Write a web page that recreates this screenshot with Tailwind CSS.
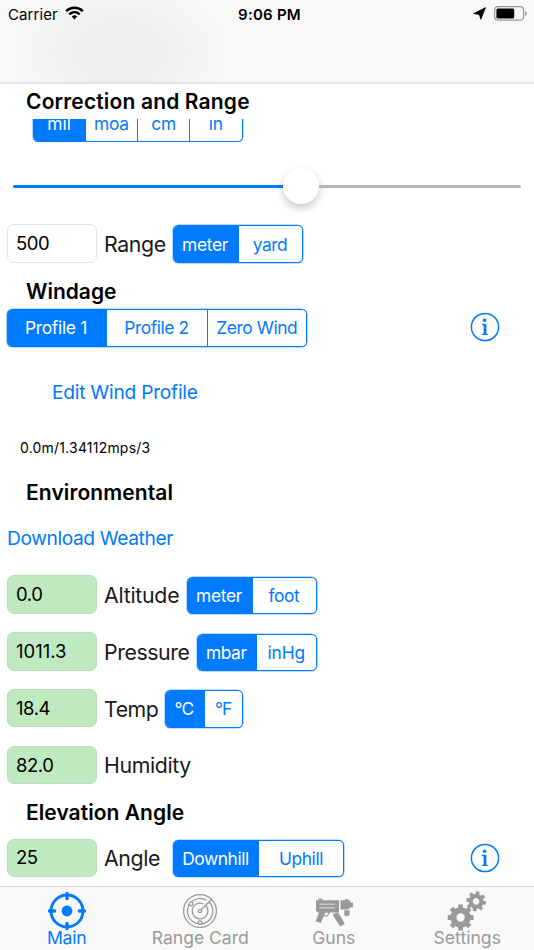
<!DOCTYPE html>
<html lang="en">
<head>
<meta charset="utf-8">
<title>Correction and Range</title>
<script src="https://cdn.jsdelivr.net/npm/@tailwindcss/browser@4"></script>
</head>
<body class="w-[534px] h-[950px] overflow-hidden bg-white font-['Inter',sans-serif] text-black">
<div class="flex flex-col w-[534px] h-[950px] whitespace-nowrap leading-none">
  <header class="h-[84px] shrink-0 border-b-2 border-[#e4e4e4] bg-[#f8f8f8] bg-[radial-gradient(ellipse_110px_75px_at_120px_52px,#eeeeee_0%,#f0f0f0_40%,#f8f8f8_100%)]">
    <div class="grid grid-cols-3 items-center h-[28px] pl-[8px] pr-[7px]">
      <div class="flex items-center gap-[7px] text-[15px]"><span class="tracking-[0.1px]">Carrier</span>
        <svg class="-mt-[2px] w-[19px] h-[14px]" viewBox="0 0 19 14" fill="none" stroke="#000" stroke-width="2.4"><path d="M1.2 5.1a11.8 11.8 0 0 1 16.6 0"/><path d="M4.3 8.3a7.4 7.4 0 0 1 10.4 0"/><path d="M9.5 13.4 6.7 10.6a4 4 0 0 1 5.6 0z" fill="#000" stroke="none"/></svg>
      </div>
      <div class="pl-[4px] text-center text-[15px] font-semibold tracking-[0.25px]">9:06 PM</div>
      <div class="flex items-center justify-end gap-[8px] pb-[2px]">
        <svg class="w-[13px] h-[13px]" viewBox="0 0 13 13"><path d="M12.6.6 7.8 12.4 6.300 7.400.6 6.600z" fill="#000" stroke="#000" stroke-width=".7" stroke-linejoin="round"/></svg>
        <svg class="w-[33px] h-[15px]" viewBox="0 0 33 15"><rect x=".6" y=".6" width="29" height="13.6" rx="3.5" fill="none" stroke="#999" stroke-width="1.2"/><rect x="2.4" y="2.4" width="17.8" height="10" rx="1.5"/><path d="M31.2 5v5c2-.8 2-4.200 0-5z" fill="#888"/></svg>
      </div>
    </div>
  </header>

  <main class="flex flex-col h-[802px] shrink-0">
    <h2 class="flex items-center h-[35px] pl-[26px] text-[21px] font-semibold tracking-[0.16px]">Correction and Range</h2>
    <div class="flex items-end h-[23px] overflow-hidden pl-[32.500px]">
      <div class="flex shrink-0 w-[210px] h-[37.5px] border border-[#007aff] shadow-[0_0_0_0.3px_#007aff] rounded-[5px] overflow-hidden text-[17.4px] text-[#007aff] divide-x divide-[#007aff]">
        <span class="flex flex-1 items-center justify-center bg-[#007aff] text-white">mil</span><span class="flex flex-1 items-center justify-center tracking-[-0.2px]">moa</span><span class="flex flex-1 items-center justify-center tracking-[-0.2px]">cm</span><span class="flex flex-1 items-center justify-center tracking-[-0.2px]">in</span>
      </div>
    </div>

    <div class="flex items-center h-[82px] pt-[7px] px-[13px]">
      <div class="h-[3px] w-[270px] bg-[#007aff] rounded-l-full"></div>
      <div class="size-[36px] shrink-0 -mt-[2px] rounded-full bg-white shadow-[0_4px_8px_rgba(0,0,0,0.22)]"></div>
      <div class="h-[3px] flex-1 bg-[#b6b6b6] rounded-r-full"></div>
    </div>

    <div class="flex items-center h-[39px] pl-[6.5px]">
      <div class="flex items-center w-[90.5px] h-[38.5px] pl-[8.5px] pb-[1px] border border-[#e4e4e4] rounded-[7px] text-[18.5px] tracking-[-0.5px]">500</div>
      <span class="w-[75.500px] pt-[2px] pl-[7px] text-[21.3px] tracking-[-0.35px] text-[#1a1a1a]">Range</span>
      <div class="flex mt-[1px] w-[130px] h-[37.5px] border border-[#007aff] shadow-[0_0_0_0.3px_#007aff] rounded-[5px] overflow-hidden text-[17.4px] tracking-[-0.42px] text-[#007aff]">
        <span class="flex w-[65px] pr-[2px] pt-[1px] items-center justify-center bg-[#007aff] text-white tracking-[-0.3px]">meter</span><span class="flex flex-1 pt-[1px] items-center justify-center">yard</span>
      </div>
    </div>

    <h2 class="flex items-center h-[46px] pt-[10px] pl-[26px] text-[21px] font-semibold">Windage</h2>
    <div class="flex items-start h-[44px] pl-[6.5px]">
      <div class="flex w-[300.5px] h-[37.5px] border border-[#007aff] shadow-[0_0_0_0.3px_#007aff] rounded-[5px] overflow-hidden text-[17.4px] tracking-[-0.42px] text-[#007aff]">
        <span class="flex w-[99px] pr-[2px] items-center justify-center bg-[#007aff] text-white tracking-[-0.3px]">Profile 1</span><span class="flex w-[100px] items-center justify-center">Profile 2</span><span class="flex flex-1 items-center justify-center border-l border-[#007aff]">Zero Wind</span>
      </div>
      <svg class="ml-[163px] mt-[3px] size-[30px]" viewBox="0 0 30 30" fill="none" stroke="#007aff"><circle cx="15" cy="15" r="13.6" stroke-width="1.5"/><circle cx="14.6" cy="8.3" r="1.8" fill="#007aff" stroke="none"/><path d="M12 12.500h3.300M12 22.300h5.800" stroke-width="1.300"/><path d="M15 12v10.500" stroke-width="2.700"/></svg>
    </div>
    <div class="flex items-center h-[79px] pl-[52px] pt-[1px] text-[19.2px] tracking-[-0.25px] text-[#007aff]">Edit Wind Profile</div>
    <div class="flex items-center h-[32px] pl-[20px] text-[14px] tracking-[0.2px]">0.0m/1.34112mps/3</div>
    <h2 class="flex items-center h-[57px] pl-[26px] text-[21px] font-semibold tracking-[0.1px]">Environmental</h2>
    <div class="flex items-start h-[45.2px] pt-[8px] pl-[7px] text-[19.2px] tracking-[-0.4px] text-[#007aff]">Download Weather</div>

    <div class="flex items-center h-[56.8px] shrink-0 pl-[6.5px]">
      <div class="flex items-center w-[90.5px] h-[38.5px] pl-[8.5px] border border-[#b9dcbb] bg-[#bfeabf] rounded-[7px] text-[18.5px] tracking-[-0.4px]">0.0</div>
      <span class="w-[89.500px] pt-[2px] pl-[7px] text-[21.3px] tracking-[-0.25px] text-[#1a1a1a]">Altitude</span>
      <div class="flex mt-[2px] w-[130px] h-[37.5px] border border-[#007aff] shadow-[0_0_0_0.3px_#007aff] rounded-[5px] overflow-hidden text-[17.4px] tracking-[-0.42px] text-[#007aff]">
        <span class="flex w-[65px] pr-[2px] items-center justify-center bg-[#007aff] text-white tracking-[-0.3px]">meter</span><span class="flex flex-1 items-center justify-center">foot</span>
      </div>
    </div>
    <div class="flex items-center h-[56.8px] shrink-0 pl-[6.5px]">
      <div class="flex items-center w-[90.5px] h-[38.5px] pl-[8.5px] pb-[1px] border border-[#b9dcbb] bg-[#bfeabf] rounded-[7px] text-[18.5px]">1011.3</div>
      <span class="w-[99.5px] pt-[2px] pl-[7px] text-[21.3px] tracking-[-0.42px] text-[#1a1a1a]">Pressure</span>
      <div class="flex mt-[2px] w-[120px] h-[37.5px] border border-[#007aff] shadow-[0_0_0_0.3px_#007aff] rounded-[5px] overflow-hidden text-[17.4px] tracking-[-0.42px] text-[#007aff]">
        <span class="flex w-[59.500px] pr-[2px] items-center justify-center bg-[#007aff] text-white">mbar</span><span class="flex flex-1 items-center justify-center tracking-[-0.2px]">inHg</span>
      </div>
    </div>
    <div class="flex items-center h-[56.8px] shrink-0 pl-[6.5px]">
      <div class="flex items-center w-[90.5px] h-[38.5px] pl-[8.5px] border border-[#b9dcbb] bg-[#bfeabf] rounded-[7px] text-[18.5px] tracking-[-0.45px]">18.4</div>
      <span class="w-[67.5px] pt-[2px] pl-[7px] text-[21.3px] tracking-[-0.45px] text-[#1a1a1a]">Temp</span>
      <div class="flex mt-[2px] w-[78.5px] h-[37.5px] border border-[#007aff] shadow-[0_0_0_0.3px_#007aff] rounded-[5px] overflow-hidden text-[17.4px] tracking-[-0.8px] text-[#007aff]">
        <span class="flex w-[39px] pr-[2px] items-center justify-center bg-[#007aff] text-white">°C</span><span class="flex flex-1 items-center justify-center">°F</span>
      </div>
    </div>
    <div class="flex items-center h-[56.8px] shrink-0 pl-[6.5px]">
      <div class="flex items-center w-[90.5px] h-[38.5px] pl-[8.5px] border border-[#b9dcbb] bg-[#bfeabf] rounded-[7px] text-[18.5px] tracking-[-0.45px]">82.0</div>
      <span class="pt-[2px] pl-[7px] text-[21.3px] tracking-[-0.35px] text-[#1a1a1a]">Humidity</span>
    </div>

    <h2 class="flex items-center h-[37.6px] pl-[26px] text-[21px] font-semibold tracking-[0.05px]">Elevation Angle</h2>
    <div class="flex items-center h-[54px] shrink-0 pl-[6.5px]">
      <div class="flex items-center w-[90.5px] h-[38.5px] pl-[8.5px] pb-[1px] border border-[#b9dcbb] bg-[#bfeabf] rounded-[7px] text-[18.5px] tracking-[-0.5px]">25</div>
      <span class="w-[76px] pt-[2px] pl-[7px] text-[21.3px] tracking-[-0.4px] text-[#1a1a1a]">Angle</span>
      <div class="flex mt-[1px] w-[171px] h-[37.5px] border border-[#007aff] shadow-[0_0_0_0.3px_#007aff] rounded-[5px] overflow-hidden text-[17.4px] tracking-[-0.42px] text-[#007aff]">
        <span class="flex w-[85px] pr-[2px] items-center justify-center bg-[#007aff] text-white">Downhill</span><span class="flex flex-1 items-center justify-center">Uphill</span>
      </div>
      <svg class="ml-[126px] size-[30px]" viewBox="0 0 30 30" fill="none" stroke="#007aff"><circle cx="15" cy="15" r="13.6" stroke-width="1.5"/><circle cx="14.6" cy="8.3" r="1.8" fill="#007aff" stroke="none"/><path d="M12 12.500h3.300M12 22.300h5.800" stroke-width="1.300"/><path d="M15 12v10.500" stroke-width="2.700"/></svg>
    </div>
  </main>

  <nav class="grid grid-cols-4 h-[64px] shrink-0 border-t border-[#d6d6d6] bg-[#f9f9f9] text-[17.6px] text-[#999]">
    <div class="flex flex-col items-center text-[#007aff]">
      <svg class="mt-[4px] w-[40px] h-[40px]" viewBox="0 0 40 40" fill="none" stroke="#007aff"><circle cx="20" cy="20" r="16" stroke-width="2.9"/><circle cx="20" cy="20" r="5.4" fill="#007aff" stroke="none"/><path d="M20 2.400v5.200M20 32.400v5.200M2.400 20h5.200M32.400 20h5.200" stroke-width="3.300" stroke-linecap="round"/></svg>
      <span class="-mt-[2px] tracking-[-0.2px]">Main</span>
    </div>
    <div class="flex flex-col items-center">
      <svg class="mt-[4px] w-[40px] h-[40px]" viewBox="0 0 40 40" fill="none" stroke="#999" stroke-width="1.3"><circle cx="20" cy="20" r="16.4"/><path d="M29 11a12.700 12.700 0 1 1-2.200-1.700M25.600 14.500a7.800 7.800 0 1 1-2.100-1.500"/><path d="m21.200 18.800 11-11"/><circle cx="20" cy="20" r="1.700"/><circle cx="11" cy="13" r="1.800" fill="#f9f9f9"/><circle cx="20" cy="31.600" r="1.800" fill="#f9f9f9"/></svg>
      <span class="-mt-[2px] tracking-[-0.05px]">Range Card</span>
    </div>
    <div class="flex flex-col items-center">
      <svg class="mt-[4px] w-[40px] h-[40px]" viewBox="0 0 40 40" fill="#999"><path d="M2 9.300h23v12.200h-9l-2.500 4.100h-3.800l-3 6.400-5.200-1.700 3.500-8.200L2 20z"/><path d="M4.500 7.600h4v1.800h-4zM26.500 9.300h4.700V7.900h2.600v1.400h2.400v2.200h2.800v4.800h-2.300l-2.500 2.300h-7.700zM30.300 19.300h5.200v4.500l-1 1.200h-3.200l-1-1.200zM18.800 23l5.400-1.500 6.600 11.300-4.600 2.700-6.200-9.500z"/><path d="M5.500 12.800h15v.8h-15zM5.500 16.500h15v.8h-15z" fill="#f9f9f9"/><path d="M11.400 21.700h3l-1.300 2.600h-2.900z" fill="#f9f9f9"/></svg>
      <span class="-mt-[2px]">Guns</span>
    </div>
    <div class="flex flex-col items-center">
      <svg class="mt-[4px] w-[40px] h-[40px]" viewBox="0 0 40 40" fill="none" stroke="#999">
        <g transform="translate(13.600 26.500)"><circle r="7.200" stroke-width="6"/><g stroke-width="4.800"><path d="M0-9v-3.900M0 9v3.900M-9 0h-3.900M9 0h3.900"/><path d="M0-9v-3.900M0 9v3.900M-9 0h-3.900M9 0h3.900" transform="rotate(45)"/></g></g>
        <g transform="translate(29.100 10.400) rotate(10)"><circle r="5.400" stroke-width="4.200"/><g stroke-width="3.600"><path d="M0-6.500v-3.400M0 6.500v3.400M-6.500 0h-3.400M6.500 0h3.400"/><path d="M0-6.500v-3.400M0 6.500v3.400M-6.500 0h-3.400M6.500 0h3.400" transform="rotate(45)"/></g></g>
      </svg>
      <span class="-mt-[2px]">Settings</span>
    </div>
  </nav>
</div>
</body>
</html>
